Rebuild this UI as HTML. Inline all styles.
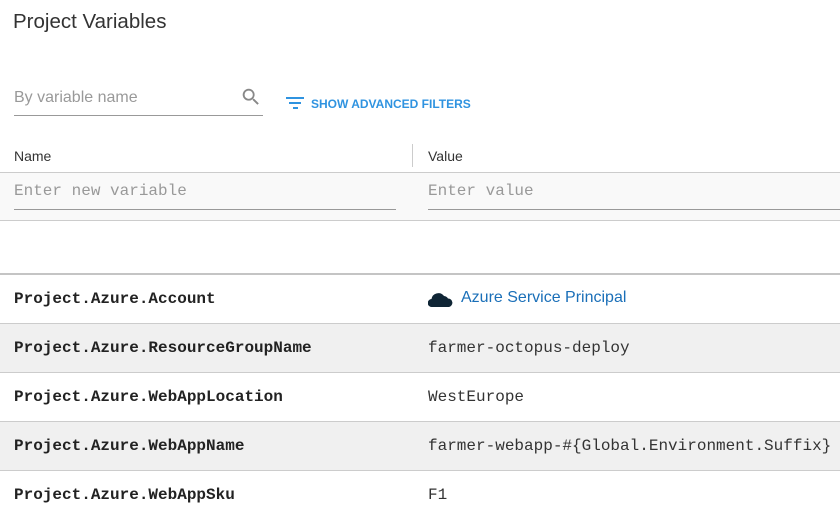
<!DOCTYPE html>
<html><head><style>
*{margin:0;padding:0;box-sizing:border-box}
body{width:840px;height:518px;overflow:hidden;background:#fff;font-family:"Liberation Sans",sans-serif;position:relative;color:#333}
.a{position:absolute}
.mono{font-family:"Liberation Mono",monospace;font-size:16px}
.row{position:absolute;left:0;width:840px;height:49px;border-bottom:1px solid #ccc}
.row .n{position:absolute;left:14px;top:15px;font-weight:bold;color:#222}
.row .v{position:absolute;left:428px;top:15px;color:#333}
</style></head><body>
<div class="a" style="left:13px;top:10px;font-size:20.5px;color:#333">Project Variables</div>
<div class="a" style="left:14px;top:89px;font-size:16px;color:#999">By variable name</div>
<svg class="a" style="left:240px;top:86px" width="22" height="22" viewBox="0 0 24 24"><path fill="#888" d="M15.5 14h-.8l-.3-.3A6.5 6.5 0 1 0 9.5 16a6.5 6.5 0 0 0 4.2-1.6l.3.3v.8l5 5 1.5-1.5-5-5zm-6 0a4.5 4.5 0 1 1 0-9 4.5 4.5 0 0 1 0 9z"/></svg>
<div class="a" style="left:14px;top:115px;width:249px;height:1px;background:#999"></div>
<svg class="a" style="left:285px;top:96px" width="20" height="16" viewBox="0 0 20 16"><rect x="1" y="1" width="18" height="2" fill="#2f93e0"/><rect x="4" y="6" width="12" height="2" fill="#2f93e0"/><rect x="8" y="11" width="5" height="2" fill="#2f93e0"/></svg>
<div class="a" style="left:311px;top:97px;font-size:12px;font-weight:bold;color:#2f93e0">SHOW ADVANCED FILTERS</div>
<div class="a" style="left:14px;top:148px;font-size:14px;color:#333">Name</div>
<div class="a" style="left:412px;top:144px;width:1px;height:23px;background:#ccc"></div>
<div class="a" style="left:428px;top:148px;font-size:14px;color:#333">Value</div>
<div class="a" style="left:0;top:172px;width:840px;height:49px;background:#f9f9f9;border-top:1px solid #ccc;border-bottom:1px solid #ccc"></div>
<div class="a mono" style="left:14px;top:182px;color:#999">Enter new variable</div>
<div class="a mono" style="left:428px;top:182px;color:#999">Enter value</div>
<div class="a" style="left:14px;top:209px;width:382px;height:1px;background:#999"></div>
<div class="a" style="left:428px;top:209px;width:412px;height:1px;background:#999"></div>
<div class="a" style="left:0;top:273px;width:840px;height:2px;background:#c4c4c4"></div>
<div class="row mono" style="top:275px;height:49px;background:#fff"><span class="n">Project.Azure.Account</span>
<svg class="a" style="left:428px;top:17px" width="25" height="15" viewBox="0 0 25 15"><path fill="#0f2535" d="M4 15a4 4 0 0 1-.5-8A7 7 0 0 1 16 4a5 5 0 0 1 4 2.5A4.3 4.3 0 0 1 21 15z"/></svg>
<span class="a" style="left:461px;top:14px;font-family:'Liberation Sans',sans-serif;font-size:16px;color:#1a6fb8">Azure Service Principal</span></div>
<div class="row mono" style="top:324px;background:#f0f0f0"><span class="n">Project.Azure.ResourceGroupName</span><span class="v">farmer-octopus-deploy</span></div>
<div class="row mono" style="top:373px;background:#fff"><span class="n">Project.Azure.WebAppLocation</span><span class="v">WestEurope</span></div>
<div class="row mono" style="top:422px;background:#f0f0f0"><span class="n">Project.Azure.WebAppName</span><span class="v">farmer-webapp-#{Global.Environment.Suffix}</span></div>
<div class="row mono" style="top:471px;background:#fff;border:none"><span class="n">Project.Azure.WebAppSku</span><span class="v">F1</span></div>
</body></html>
